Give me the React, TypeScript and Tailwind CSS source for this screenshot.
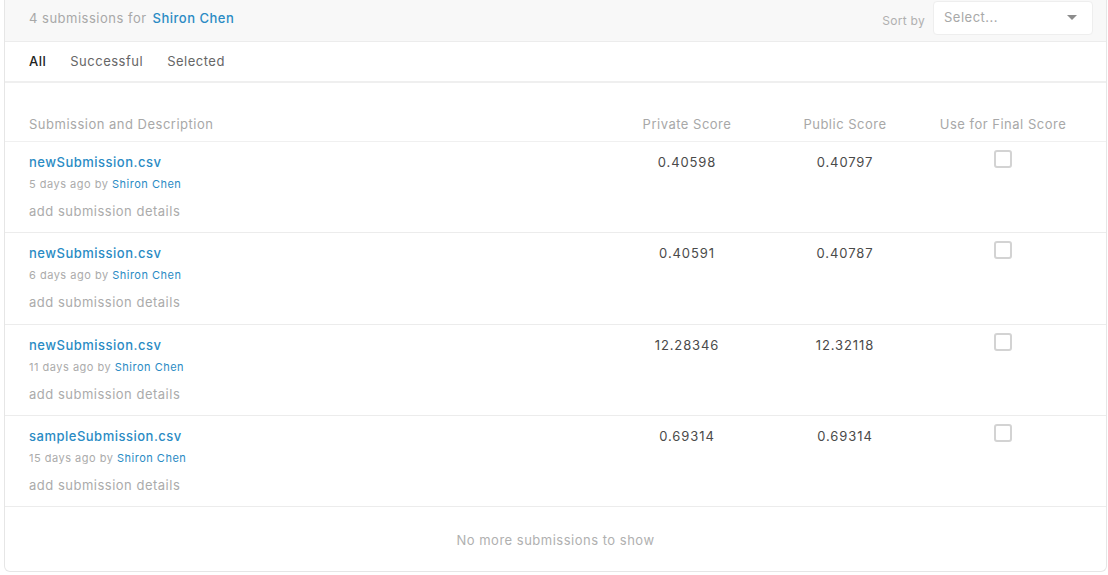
import React from 'react';

const rows = [
  { name: 'newSubmission.csv', ago: '5 days ago', priv: '0.40598', pub: '0.40797' },
  { name: 'newSubmission.csv', ago: '6 days ago', priv: '0.40591', pub: '0.40787' },
  { name: 'newSubmission.csv', ago: '11 days ago', priv: '12.28346', pub: '12.32118' },
  { name: 'sampleSubmission.csv', ago: '15 days ago', priv: '0.69314', pub: '0.69314' },
];

export default function App() {
  return (
    <div className="min-h-screen bg-white pl-1 pr-px pb-1 font-['Inter',sans-serif] tracking-[0.5px]">
      <div className="border-x border-b border-[#e6e6e6] rounded-b-md overflow-hidden">
        <div className="h-[42px] bg-[#f8f8f8] border-b border-[#ececec] flex items-center pl-6 pr-[13px]">
          <div className="flex items-center -mt-[4px]">
            <span className="text-[13px] text-[#a8a8a8]">4 submissions for</span>
            <span className="text-[13px] text-[#2a8bc4] font-medium ml-[6px]">Shiron Chen</span>
          </div>
          <div className="ml-auto flex items-center gap-2">
            <span className="text-[12px] text-[#b0b0b0] tracking-[0.3px]">Sort by</span>
            <div className="w-[160px] h-[34px] mb-[6px] bg-white border border-[#eeeeee] rounded-[4px] flex items-center pl-[10px] pr-[15px]">
              <span className="text-[13px] text-[#a8a8a8]">Select...</span>
              <span className="ml-auto w-0 h-0 border-l-[5px] border-r-[5px] border-t-[5px] border-l-transparent border-r-transparent border-t-[#8c8c8c]" />
            </div>
          </div>
        </div>
        <div className="h-[41px] border-b-2 border-[#efefef] flex items-center pl-6 pt-[1px] gap-[24px] text-[13px]">
          <span className="text-[#222] font-medium">All</span>
          <span className="text-[#666]">Successful</span>
          <span className="text-[#666]">Selected</span>
        </div>
        <div className="flex items-center h-[59px] pt-[26px] px-6 border-b border-[#f0f0f0] text-[13px] text-[#a8a8a8]">
          <div className="flex-1">Submission and Description</div>
          <div className="w-[158px] text-center">Private Score</div>
          <div className="w-[158px] text-center">Public Score</div>
          <div className="w-[158px] text-center">Use for Final Score</div>
        </div>
        {rows.map((r, i) => (
          <div key={i} className="border-b border-[#ececec] px-6 h-[91.25px] flex items-start pt-[12px]">
            <div className="flex-1">
              <div className="text-[13px] leading-4 text-[#2a8bc4] font-medium">{r.name}</div>
              <div className="text-[11px] leading-4 mt-[6px] text-[#ababab]">
                {r.ago} by <span className="text-[#2a8bc4]">Shiron Chen</span>
              </div>
              <div className="text-[13px] leading-4 mt-[11px] text-[#ababab]">add submission details</div>
            </div>
            <div className="w-[158px] text-center text-[13px] leading-4 text-[#4a4a4a] tracking-[0.9px]">{r.priv}</div>
            <div className="w-[158px] text-center text-[13px] leading-4 text-[#4a4a4a] tracking-[0.9px]">{r.pub}</div>
            <div className="w-[158px] flex justify-center -mt-[4px]">
              <div className="w-[18px] h-[18px] border-2 border-[#d3d3d3] rounded-[3px] bg-white" />
            </div>
          </div>
        ))}
        <div className="h-[64px] flex items-center justify-center pt-[4px] text-[13px] text-[#b0b0b0]">
          No more submissions to show
        </div>
      </div>
    </div>
  );
}
